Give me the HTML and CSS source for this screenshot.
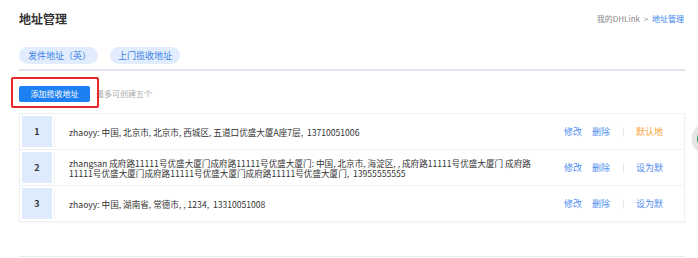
FILE: index.html
```html
<!DOCTYPE html>
<html lang="zh-CN">
<head>
    <meta charset="UTF-8">
    <title>地址管理</title>
    <link rel="stylesheet" href="styles.css">
</head>
<body>
    <div class="page">
        <div class="head">
            <h1>地址管理</h1>
            <div class="crumb">我的DHLink <span class="sep">&gt;</span> <a href="#">地址管理</a></div>
        </div>

        <div class="tabs">
            <a class="tab" href="#">发件地址（英）</a>
            <a class="tab" href="#">上门揽收地址</a>
        </div>

        <div class="toolbar">
            <button class="add-btn">添加揽收地址</button>
            <span class="hint">最多可创建五个</span>
            <div class="mark"></div>
        </div>

        <div class="list">
            <div class="row">
                <div class="num">1</div>
                <div class="addr">zhaoyy: 中国, 北京市, 北京市, 西城区, 五道口优盛大厦A座7层,&nbsp; 13710051006</div>
                <div class="ops">
                    <a href="#">修改</a>
                    <a href="#">删除</a>
                    <span class="bar"></span>
                    <span class="default">默认地</span>
                </div>
            </div>
            <div class="row">
                <div class="num">2</div>
                <div class="addr">zhangsan 成府路11111号优盛大厦门成府路11111号优盛大厦门: 中国, 北京市, 海淀区, , 成府路11111号优盛大厦门 成府路11111号优盛大厦门成府路11111号优盛大厦门成府路11111号优盛大厦门,&nbsp; 13955555555</div>
                <div class="ops">
                    <a href="#">修改</a>
                    <a href="#">删除</a>
                    <span class="bar"></span>
                    <a href="#">设为默</a>
                </div>
            </div>
            <div class="row">
                <div class="num">3</div>
                <div class="addr">zhaoyy: 中国, 湖南省, 常德市, , 1234,&nbsp; 13310051008</div>
                <div class="ops">
                    <a href="#">修改</a>
                    <a href="#">删除</a>
                    <span class="bar"></span>
                    <a href="#">设为默</a>
                </div>
            </div>
        </div>

        <div class="foot-line"></div>
    </div>
    <div class="float-btn"></div>
</body>
</html>
```

FILE: styles.css
```css
body {
    margin: 0;
    background: #fff;
    font-family: "Noto Sans CJK SC", "Noto Sans", sans-serif;
    color: #333;
    overflow: hidden;
}

.page {
    width: 666px;
    margin-left: 19px;
}

.head {
    display: flex;
    justify-content: space-between;
    align-items: center;
    padding-top: 9px;
    height: 18px;
}

h1 {
    margin: 0;
    font-size: 12px;
    font-weight: bold;
    color: #333;
}

.crumb {
    font-size: 8px;
    color: #888;
    margin-right: 1px;
}

.crumb .sep {
    margin: 0 2px;
}

.crumb a {
    color: #3a86f0;
    text-decoration: none;
}

.tabs {
    display: flex;
    gap: 12px;
    margin-top: 20px;
    padding-bottom: 5px;
    border-bottom: 2px solid #e1e5ef;
}

.tab {
    display: block;
    height: 17px;
    line-height: 17px;
    padding: 0 8px;
    border-radius: 9px;
    background: #e1edfd;
    color: #3a7fe6;
    font-size: 9px;
    text-decoration: none;
}

.tab:first-child {
    padding: 0 7px 0 9px;
}

.toolbar {
    position: relative;
    display: flex;
    align-items: center;
    gap: 6px;
    margin-top: 14px;
    height: 17px;
}

.add-btn {
    width: 71px;
    height: 16px;
    padding: 0;
    border: none;
    border-radius: 2px;
    background: #1c7ff2;
    color: #fff;
    font-family: inherit;
    font-size: 8px;
}

.hint {
    font-size: 8px;
    color: #aaa;
}

.mark {
    position: absolute;
    left: -8px;
    top: -8px;
    width: 84px;
    height: 27px;
    border: 2px solid #e8262a;
    border-radius: 2px;
}

.list {
    margin-top: 11px;
    border: 1px solid #eef0f4;
    box-shadow: 0 1px 2px rgba(0, 0, 0, 0.04);
}

.row {
    display: flex;
    align-items: center;
    min-height: 35px;
    border-top: 1px solid #eef0f4;
}

.row:first-child {
    border-top: none;
}

.num {
    align-self: stretch;
    display: flex;
    align-items: center;
    justify-content: center;
    width: 30px;
    margin: 2px;
    padding-right: 2px;
    background: #deebfc;
    background-clip: content-box;
    border-right: 1px solid #eef0f4;
    font-size: 9px;
    font-weight: bold;
    color: #333;
}

.addr {
    flex: 1;
    padding: 0 14px 0 12px;
    font-size: 8.6px;
    line-height: 10px;
    color: #333;
}

.ops {
    display: flex;
    align-items: center;
    width: 120px;
    font-size: 9px;
}

.ops a {
    color: #4f8df0;
    text-decoration: none;
    margin-right: 10px;
}

.ops .bar {
    width: 1px;
    height: 10px;
    background: #e4e7ee;
    margin: 0 12px 0 3px;
}

.ops .bar + a {
    margin-right: 0;
}

.default {
    color: #f7a034;
}

.foot-line {
    margin-top: 34px;
    border-top: 1px solid #e8e9ec;
}

.float-btn {
    position: absolute;
    left: 693px;
    top: 124px;
    width: 22px;
    height: 22px;
    border-radius: 50%;
    border: 4px solid #e6e6e6;
    background: #2f9e5e;
    box-shadow: 0 0 3px rgba(0, 0, 0, 0.3);
}
```
